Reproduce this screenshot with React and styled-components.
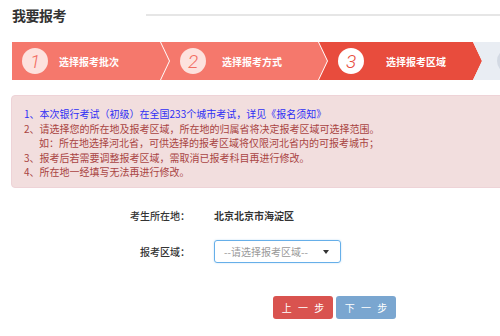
import React from "react";
import styled, { createGlobalStyle } from "styled-components";

const GlobalStyle = createGlobalStyle`
  html, body {
    margin: 0;
    padding: 0;
    background: #fff;
    overflow: hidden;
  }
  body {
    font-family: "Noto Sans CJK SC", "Noto Sans", sans-serif;
    color: #333;
  }
`;

const Page = styled.div`
  width: 500px;
  height: 336px;
  overflow: hidden;
  padding-left: 12px;
  box-sizing: border-box;
`;

const Header = styled.div`
  display: flex;
  align-items: center;
  height: 30px;
`;

const Title = styled.h2`
  margin: 0;
  width: 134px;
  font-size: 14px;
  font-weight: 700;
  color: #333;
  letter-spacing: -0.5px;
`;

const HeaderLine = styled.div`
  flex: 1;
  height: 2px;
  background: #e6e6e6;
`;

const Steps = styled.div`
  display: flex;
  height: 38px;
  margin-top: 12px;
  background: #fff;
`;

const Step = styled.div`
  flex-shrink: 0;
  width: ${(p) => p.$w}px;
  margin-left: ${(p) => (p.$first ? 0 : p.$overlap)}px;
  display: flex;
  align-items: center;
  padding-left: ${(p) => p.$pad}px;
  box-sizing: border-box;
  background: ${(p) => p.$bg};
  clip-path: ${(p) =>
    p.$first
      ? "polygon(0 0, calc(100% - 9px) 0, 100% 50%, calc(100% - 9px) 100%, 0 100%)"
      : "polygon(0 0, calc(100% - 9px) 0, 100% 50%, calc(100% - 9px) 100%, 0 100%, 9px 50%)"};
`;

const Circle = styled.div`
  width: 26px;
  height: 26px;
  border-radius: 50%;
  flex-shrink: 0;
  background: ${(p) => p.$bg};
  color: ${(p) => p.$color};
  display: flex;
  align-items: center;
  justify-content: center;
  font-family: "Roboto", "DejaVu Sans", sans-serif;
  font-style: italic;
  font-weight: 300;
  font-size: 19px;
  line-height: 1;
`;

const StepLabel = styled.span`
  margin-left: ${(p) => p.$gap}px;
  color: #fff;
  font-size: 10px;
  font-weight: 700;
  white-space: nowrap;
`;

const Notice = styled.div`
  margin-top: 15px;
  margin-left: -1px;
  margin-right: -10px;
  height: 93px;
  box-sizing: border-box;
  padding: 11px 0 0 12px;
  background: #f2dede;
  border: 1px solid #eed3d7;
  border-radius: 4px;
  font-size: 10px;
  line-height: 14.5px;
  color: #a94442;
`;

const NoticeLine = styled.div`
  white-space: nowrap;
  padding-left: ${(p) => (p.$indent ? 15 : 0)}px;
  color: ${(p) => (p.$link ? "#2f2ff5" : "#a94442")};
`;

const Form = styled.div`
  display: grid;
  grid-template-columns: 178px auto;
  column-gap: 24px;
  row-gap: 13px;
  align-items: center;
  margin-top: 16px;
`;

const Label = styled.div`
  text-align: right;
  font-size: 10px;
  font-weight: 500;
  color: #333;
  height: 23px;
  line-height: 23px;
`;

const Value = styled.div`
  font-size: 10px;
  font-weight: 700;
  color: #333;
`;

const Select = styled.div`
  width: 127px;
  height: 23px;
  box-sizing: border-box;
  border: 1px solid #66afe9;
  border-radius: 3px;
  display: flex;
  align-items: center;
  justify-content: space-between;
  padding: 0 11px 0 9px;
  font-size: 10px;
  color: #999;
  box-shadow: 0 0 2px rgba(102, 175, 233, 0.4);
`;

const Caret = styled.span`
  width: 0;
  height: 0;
  border-left: 3.5px solid transparent;
  border-right: 3.5px solid transparent;
  border-top: 4px solid #333;
`;

const Buttons = styled.div`
  display: flex;
  gap: 3px;
  margin-top: 33px;
  padding-left: 261px;
`;

const Button = styled.button`
  width: 60px;
  height: 23px;
  border: none;
  border-radius: 3px;
  background: ${(p) => p.$bg};
  color: #fff;
  font-family: inherit;
  font-size: 10px;
  letter-spacing: 2px;
  padding: 0 0 0 2px;
  cursor: pointer;
`;

const steps = [
  { n: "1", label: "选择报考批次", w: 157, pad: 10, gap: 11, bg: "#f5786c", cbg: "#fde2de", cc: "#f26d61" },
  { n: "2", label: "选择报考方式", w: 166, pad: 19, gap: 16, bg: "#f5786c", cbg: "#fde2de", cc: "#f26d61" },
  { n: "3", label: "选择报考区域", w: 163, pad: 19, gap: 22, bg: "#e84c3d", cbg: "#ffffff", cc: "#e84c3d" },
  { n: "", label: "", w: 120, pad: 24, gap: 20, bg: "#e9edf3", cbg: "#d3d9e3", cc: "#fff" },
];

export default function App() {
  return (
    <Page>
      <GlobalStyle />
      <Header>
        <Title>我要报考</Title>
        <HeaderLine />
      </Header>

      <Steps>
        {steps.map((s, i) => (
          <Step
            key={i}
            $first={i === 0}
            $overlap={i === 3 ? -9 : -8}
            $w={s.w}
            $pad={s.pad}
            $bg={s.bg}
          >
            <Circle $bg={s.cbg} $color={s.cc}>
              {s.n}
            </Circle>
            {s.label && <StepLabel $gap={s.gap}>{s.label}</StepLabel>}
          </Step>
        ))}
      </Steps>

      <Notice>
        <NoticeLine $link>1、本次银行考试（初级）在全国233个城市考试，详见《报名须知》</NoticeLine>
        <NoticeLine>2、请选择您的所在地及报考区域，所在地的归属省将决定报考区域可选择范围。</NoticeLine>
        <NoticeLine $indent>如：所在地选择河北省，可供选择的报考区域将仅限河北省内的可报考城市；</NoticeLine>
        <NoticeLine>3、报考后若需要调整报考区域，需取消已报考科目再进行修改。</NoticeLine>
        <NoticeLine>4、所在地一经填写无法再进行修改。</NoticeLine>
      </Notice>

      <Form>
        <Label>考生所在地：</Label>
        <Value>北京北京市海淀区</Value>
        <Label>报考区域：</Label>
        <Select>
          <span>--请选择报考区域--</span>
          <Caret />
        </Select>
      </Form>

      <Buttons>
        <Button $bg="#d9534f">上 一 步</Button>
        <Button $bg="#7aa6d0">下 一 步</Button>
      </Buttons>
    </Page>
  );
}
